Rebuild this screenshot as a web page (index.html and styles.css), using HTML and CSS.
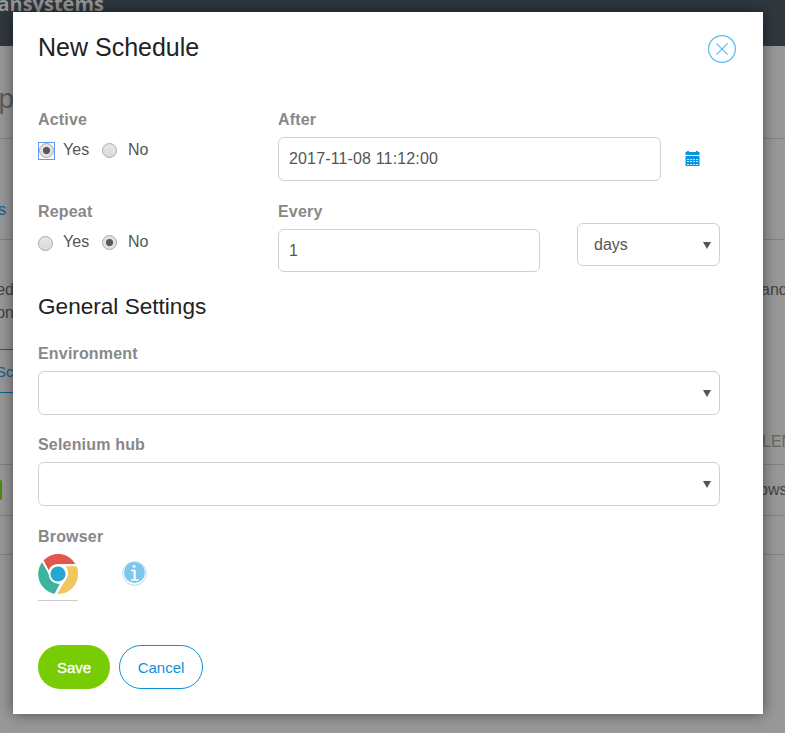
FILE: index.html
```html
<!DOCTYPE html>
<html lang="en">
<head>
<meta charset="utf-8">
<title>New Schedule</title>
<link rel="stylesheet" href="styles.css">
</head>
<body>
<div class="page">
  <header class="topbar"><span class="brand">ansystems</span></header>
  <div class="band band-title"><span class="edge big">p</span></div>
  <div class="band band-tabs"><span class="edge tab">s</span></div>
  <div class="band-text">
    <div class="line"><span class="edge">ed</span><span class="far">and</span></div>
    <div class="line"><span class="edge">on</span></div>
  </div>
  <div class="ghost-button"><span>Sch</span></div>
  <div class="band band-head"><span class="far head">LEN</span></div>
  <div class="band band-row"><span class="pill"></span><span class="far row-text">ows</span></div>
  <div class="band band-foot"></div>
</div>

<main class="modal">
  <div class="modal-head">
    <h1>New Schedule</h1>
    <svg class="close" viewBox="0 0 28 28"><circle cx="14" cy="14" r="13.4"/><path d="M8.3 8.3l11.4 11.4M19.7 8.3L8.3 19.7"/></svg>
  </div>

  <div class="row">
    <div class="left">
      <div class="label">Active</div>
      <div class="radios"><span class="focus"><i class="radio on"></i></span><span class="yes">Yes</span><i class="radio"></i><span class="no">No</span></div>
    </div>
    <div class="after">
      <div class="label">After</div>
      <div class="field date">2017-11-08 11:12:00</div>
    </div>
    <svg class="calendar" viewBox="0 0 15 15"><path fill="#0a96de" d="M.5 1H2V0h2v1h7V0h2v1h1.5v3H.5zM.5 5h14v10H.5z"/><path stroke="#fff" stroke-width="1" stroke-dasharray="2 1" d="M2 8.5h11M2 10.5h11M2 13.5h11" opacity=".8"/></svg>
  </div>

  <div class="row">
    <div class="left">
      <div class="label">Repeat</div>
      <div class="radios"><span class="focus off"><i class="radio"></i></span><span class="yes">Yes</span><i class="radio on"></i><span class="no">No</span></div>
    </div>
    <div class="every">
      <div class="label">Every</div>
      <div class="field short">1</div>
    </div>
    <div class="field select units"><span>days</span><i class="arrow"></i></div>
  </div>

  <h2>General Settings</h2>

  <div class="label wide">Environment</div>
  <div class="field select"><i class="arrow"></i></div>

  <div class="label hub">Selenium hub</div>
  <div class="field select"><i class="arrow"></i></div>

  <div class="label browser">Browser</div>
  <div class="browsers">
    <div class="chrome">
      <svg viewBox="0 0 40 40">
        <circle cx="20" cy="20" r="20" fill="#fff"/>
        <path fill="#e2574c" d="M5.5 6.2A20 20 0 0 1 37.4 10H20a10 10 0 0 0-9.3 6.3z"/>
        <path fill="#3db39e" d="M4 8.3l7.5 13A9.6 9.6 0 0 0 21.8 29.7L16.6 39.7A20 20 0 0 1 4 8.3z"/>
        <path fill="#efc75e" d="M27.5 12.2h11A20 20 0 0 1 19.2 40l8.6-14.5a10 10 0 0 0-.3-13.3z"/>
        <circle cx="20" cy="20" r="9.4" fill="#fff"/>
        <circle cx="20" cy="20" r="7.6" fill="#27a5d3"/>
      </svg>
    </div>
    <svg class="info" viewBox="0 0 25 25"><circle cx="12.5" cy="12.5" r="11.8" fill="#fff" stroke="#a5d9f2" stroke-width=".9"/><circle cx="12.5" cy="11.5" r="10.5" fill="#7cc7eb"/><path fill="#fff" d="M10.7 4.2h2.8v2.3h-2.8zM9 8.8h4.7v9.4h3v1.5H8.6v-1.5h3v-7.9H9z"/></svg>
  </div>

  <div class="buttons"><span class="save">Save</span><span class="cancel">Cancel</span></div>
</main>
</body>
</html>
```
FILE: styles.css
```css
* { box-sizing: border-box; }
body {
  margin: 0;
  height: 733px;
  overflow: hidden;
  background: #989898;
  color: #555;
  font: 16px/20px "Liberation Sans", Arial, sans-serif;
}

/* dimmed page behind the dialog */
.page { height: 733px; overflow: hidden; color: #444; }
.topbar { height: 46px; background: #30383f; overflow: hidden; }
.brand {
  display: block;
  width: 104px;
  margin-top: -7px;
  direction: rtl;
  white-space: nowrap;
  font: bold 20px/22px "Open Sans", sans-serif;
  color: #979797;
}
.band { display: flex; justify-content: space-between; border-bottom: 1px solid #828282; }
.edge { display: flex; justify-content: flex-end; width: 14px; }
.far { margin-left: auto; width: 24px; white-space: nowrap; }
.big { font-size: 28px; line-height: 32px; }
.band-title { height: 93px; padding-top: 37px; color: #5b5b5b; }
.band-tabs { height: 101px; padding-top: 61px; }
.tab { width: 6px; color: #12618b; }
.band-text { height: 109px; padding-top: 40px; }
.line { display: flex; height: 23px; }
.ghost-button {
  width: 60px;
  height: 44px;
  padding-top: 12px;
  border: 1px solid #0d6593;
  border-width: 1px 0;
  color: #12618b;
}
.ghost-button span { display: block; width: 23px; margin-left: -4px; font-size: 15px; }
.band-head { height: 72px; padding-top: 39px; }
.head { width: 23px; color: #666; }
.band-row { height: 51px; padding-top: 15px; }
.pill { width: 2px; height: 20px; background: #4c8a0b; border-radius: 0 3px 3px 0; }
.row-text { width: 26px; }
.band-foot { height: 39px; }

.modal {
  position: absolute;
  left: 13px;
  top: 12px;
  width: 750px;
  height: 702px;
  padding: 0 43px 0 25px;
  background: #fff;
  box-shadow: 0 0 14px rgba(0, 0, 0, .5);
}
.modal-head { display: flex; justify-content: space-between; height: 98px; margin-right: -16px; }
h1 { margin: 21px 0 0; font-size: 25px; line-height: 28px; font-weight: normal; color: #222; }
.close { width: 28px; height: 28px; margin-top: 23px; fill: none; stroke: #5bbbea; stroke-width: 1.2; }
.row { display: flex; height: 92px; }
.left { width: 240px; }
.label { height: 20px; margin-bottom: 7px; font-weight: bold; color: #888; letter-spacing: .18px; }
.field {
  display: flex;
  align-items: center;
  height: 44px;
  padding: 0 10px;
  border: 1px solid #d0d0d0;
  border-radius: 6px;
}
.date { letter-spacing: .15px; }
.after { width: 383px; }
.calendar { width: 15px; height: 15px; margin: 41px 0 0 24px; }
.every { width: 262px; }
.short { height: 43px; }
.units { width: 143px; height: 43px; margin: 21px 0 0 37px; padding-left: 16px; }
.select { justify-content: space-between; padding-right: 8px; }
.arrow {
  margin: 1px 0 0 auto;
  border: 4px solid transparent;
  border-top: 7px solid #555;
  border-bottom: 0;
}
.radios { display: flex; align-items: center; height: 20px; margin-top: 10px; }
.label + .radios { margin-top: 3px; transform: none; }
.left .label { margin-bottom: 0; padding-bottom: 0; }
.left .radios { margin-top: 10px; }
.radio {
  display: block;
  width: 15px;
  height: 15px;
  margin-top: 1px;
  border: 1px solid #aaa;
  border-radius: 50%;
  background: linear-gradient(#e8e8e8, #dadada);
}
.radio.on { background: radial-gradient(circle, #5a5a5a 0 3.2px, #e2e2e2 4px); }
.focus { width: 17px; height: 18px; margin-top: 2px; border: 1.5px solid #5c9bf7; }
.focus .radio { margin: 0; }
.focus.off { padding-top: 1px; border-color: transparent; border-left-width: 0; }
.yes { width: 39px; margin-left: 8px; letter-spacing: .1px; }
.no { margin-left: 11px; }

h2 { margin: 0 0 25px; height: 25px; font-size: 22.6px; line-height: 25px; font-weight: normal; color: #222; }
.hub { margin-top: 20px; }
.browser { margin-top: 21px; }
.browsers { display: flex; height: 91px; }
.chrome { width: 40px; height: 47px; border-bottom: 1px solid #ccc; }
.chrome svg { display: block; width: 40px; height: 40px; }
.info { width: 25px; height: 25px; margin: 7px 0 0 44px; }
.buttons { display: flex; gap: 9px; }
.save, .cancel { display: flex; align-items: center; justify-content: center; height: 44px; border-radius: 22px; padding-top: 1px; }
.save { width: 72px; background: #77cc04; color: #fff; font-size: 15px; -webkit-text-stroke: .3px #fff; }
.cancel { width: 84px; border: 1px solid #0a93d9; color: #0a93d9; font-size: 15px; }
```
